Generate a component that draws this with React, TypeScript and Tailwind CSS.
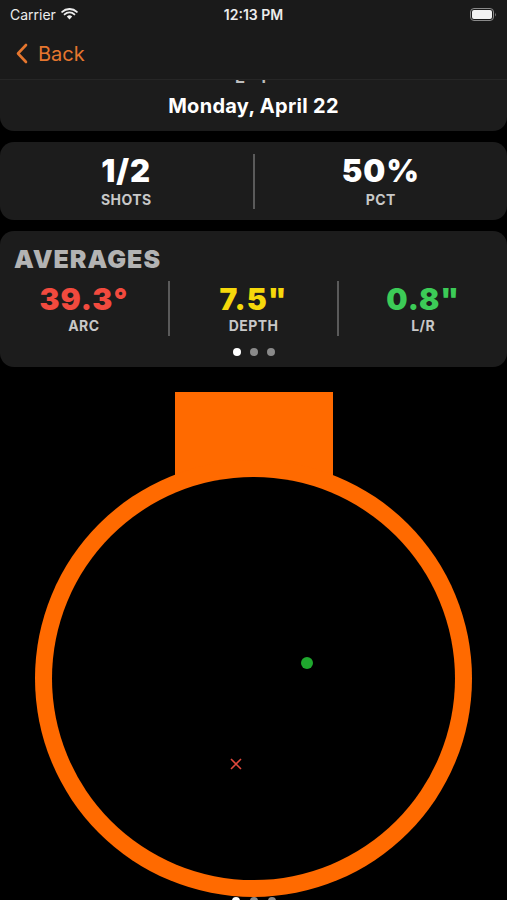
import React from 'react'

const FONT = { fontFamily: 'Inter, "Noto Sans", sans-serif' }

type Stat = { value: string; label: string; color: string }

const AVERAGES: Stat[] = [
  { value: '39.3°', label: 'ARC', color: 'text-[#f24a3e]' },
  { value: '7.5"', label: 'DEPTH', color: 'text-[#f6d80b]' },
  { value: '0.8"', label: 'L/R', color: 'text-[#3ccb57]' },
]

function StatusBar() {
  return (
    <div className="flex h-[28px] items-center justify-between px-[10px] text-[14px] text-[#ececec]">
      <div className="flex w-[120px] items-center gap-[5px]">
        <span>Carrier</span>
        <svg width="17" height="12" viewBox="0 0 17 12">
          <path d="M8.5 11.5 L5.8 8.6 A3.8 3.8 0 0 1 11.2 8.6 Z" fill="#ececec" />
          <path d="M3.6 6.4 A7 7 0 0 1 13.4 6.4" stroke="#ececec" strokeWidth="1.9" fill="none" strokeLinecap="round" />
          <path d="M1.2 3.9 A10.5 10.5 0 0 1 15.8 3.9" stroke="#ececec" strokeWidth="1.9" fill="none" strokeLinecap="round" />
        </svg>
      </div>
      <span className="font-semibold">12:13 PM</span>
      <div className="flex w-[120px] justify-end">
        <svg width="27" height="13" viewBox="0 0 27 13">
          <rect x="0.5" y="0.5" width="23" height="12" rx="3.5" stroke="#8a8a8a" fill="none" />
          <rect x="2" y="2" width="20" height="9" rx="2" fill="#f2f2f2" />
          <path d="M25 4.5 Q26.5 6.5 25 8.5 Z" fill="#8a8a8a" />
        </svg>
      </div>
    </div>
  )
}

function Header() {
  return (
    <div className="absolute inset-x-0 top-0 z-10 h-[80px] border-b border-[#262626] bg-[#1a1a1a]">
      <StatusBar />
      <div className="flex h-[51px] items-center gap-[10px] pl-[16px] text-[#e5762e]">
        <svg width="12" height="21" viewBox="0 0 12 21">
          <path d="M10 2 L2 10.5 L10 19" stroke="#e5762e" strokeWidth="2.6" fill="none" strokeLinecap="round" strokeLinejoin="round" />
        </svg>
        <span className="text-[20px]">Back</span>
      </div>
    </div>
  )
}

function Divider({ h }: { h: string }) {
  return <div className={`w-[2px] bg-[#5a5a5a] ${h}`} />
}

export default function App() {
  return (
    <main className="relative h-[900px] overflow-hidden bg-black" style={FONT}>
      <Header />
      <div className="flex flex-col gap-[11px] pt-[40px]">
        <section className="flex h-[91px] flex-col items-center justify-end rounded-[14px] bg-[#1c1c1c] pb-[12px]">
          <span className="mb-[6px] text-[18px] font-semibold leading-[20px] tracking-[6px] text-[#bdbdbd]">L I</span>
          <span className="text-[20px] font-bold leading-[26px] tracking-[0.3px] text-white">Monday, April 22</span>
        </section>

        <section className="flex h-[78px] items-center rounded-[14px] bg-[#1c1c1c]">
          <div className="flex flex-1 flex-col items-center">
            <span className="text-[31px] font-black leading-[34px] tracking-[1px] text-white">1/2</span>
            <span className="mt-[4px] text-[14px] font-bold leading-[16px] tracking-[0.4px] text-[#c8c8c8]">SHOTS</span>
          </div>
          <Divider h="h-[55px]" />
          <div className="flex flex-1 flex-col items-center">
            <span className="text-[31px] font-black leading-[34px] tracking-[1px] text-white">50%</span>
            <span className="mt-[4px] text-[14px] font-bold leading-[16px] tracking-[0.4px] text-[#c8c8c8]">PCT</span>
          </div>
        </section>

        <section className="flex h-[136px] flex-col rounded-[14px] bg-[#1c1c1c] pt-[14px]">
          <h2 className="pl-[14px] text-[25px] font-black leading-[28px] tracking-[1px] text-[#b3b3b3]">AVERAGES</h2>
          <div className="mt-[8px] flex items-center">
            {AVERAGES.map((s, i) => (
              <React.Fragment key={s.label}>
                {i > 0 ? <Divider h="h-[55px]" /> : null}
                <div className="flex flex-1 flex-col items-center">
                  <span className={`text-[30px] font-black leading-[32px] tracking-[1px] ${s.color}`}>{s.value}</span>
                  <span className="mt-[3px] text-[14px] font-bold leading-[16px] tracking-[0.4px] text-[#c8c8c8]">{s.label}</span>
                </div>
              </React.Fragment>
            ))}
          </div>
          <div className="mt-[12px] flex justify-center gap-[9px]">
            <span className="h-[8px] w-[8px] rounded-full bg-white" />
            <span className="h-[8px] w-[8px] rounded-full bg-[#8a8a8a]" />
            <span className="h-[8px] w-[8px] rounded-full bg-[#8a8a8a]" />
          </div>
        </section>
      </div>

      <svg className="block" width="507" height="530" viewBox="0 0 507 530">
        <rect x="175" y="25" width="158" height="120" fill="#ff6a00" />
        <circle cx="253.5" cy="311.5" r="218.5" fill="#ff6a00" />
        <circle cx="253.5" cy="311.5" r="201.5" fill="#000" />
        <circle cx="307" cy="296" r="6" fill="#1fa82e" />
        <path d="M231 392 L241 402 M241 392 L231 402" stroke="#e0483c" strokeWidth="1.6" />
      </svg>
      <div className="flex justify-center gap-[10px]">
        <span className="h-[8px] w-[8px] rounded-full bg-white" />
        <span className="h-[8px] w-[8px] rounded-full bg-[#8a8a8a]" />
        <span className="h-[8px] w-[8px] rounded-full bg-[#8a8a8a]" />
      </div>
    </main>
  )
}
